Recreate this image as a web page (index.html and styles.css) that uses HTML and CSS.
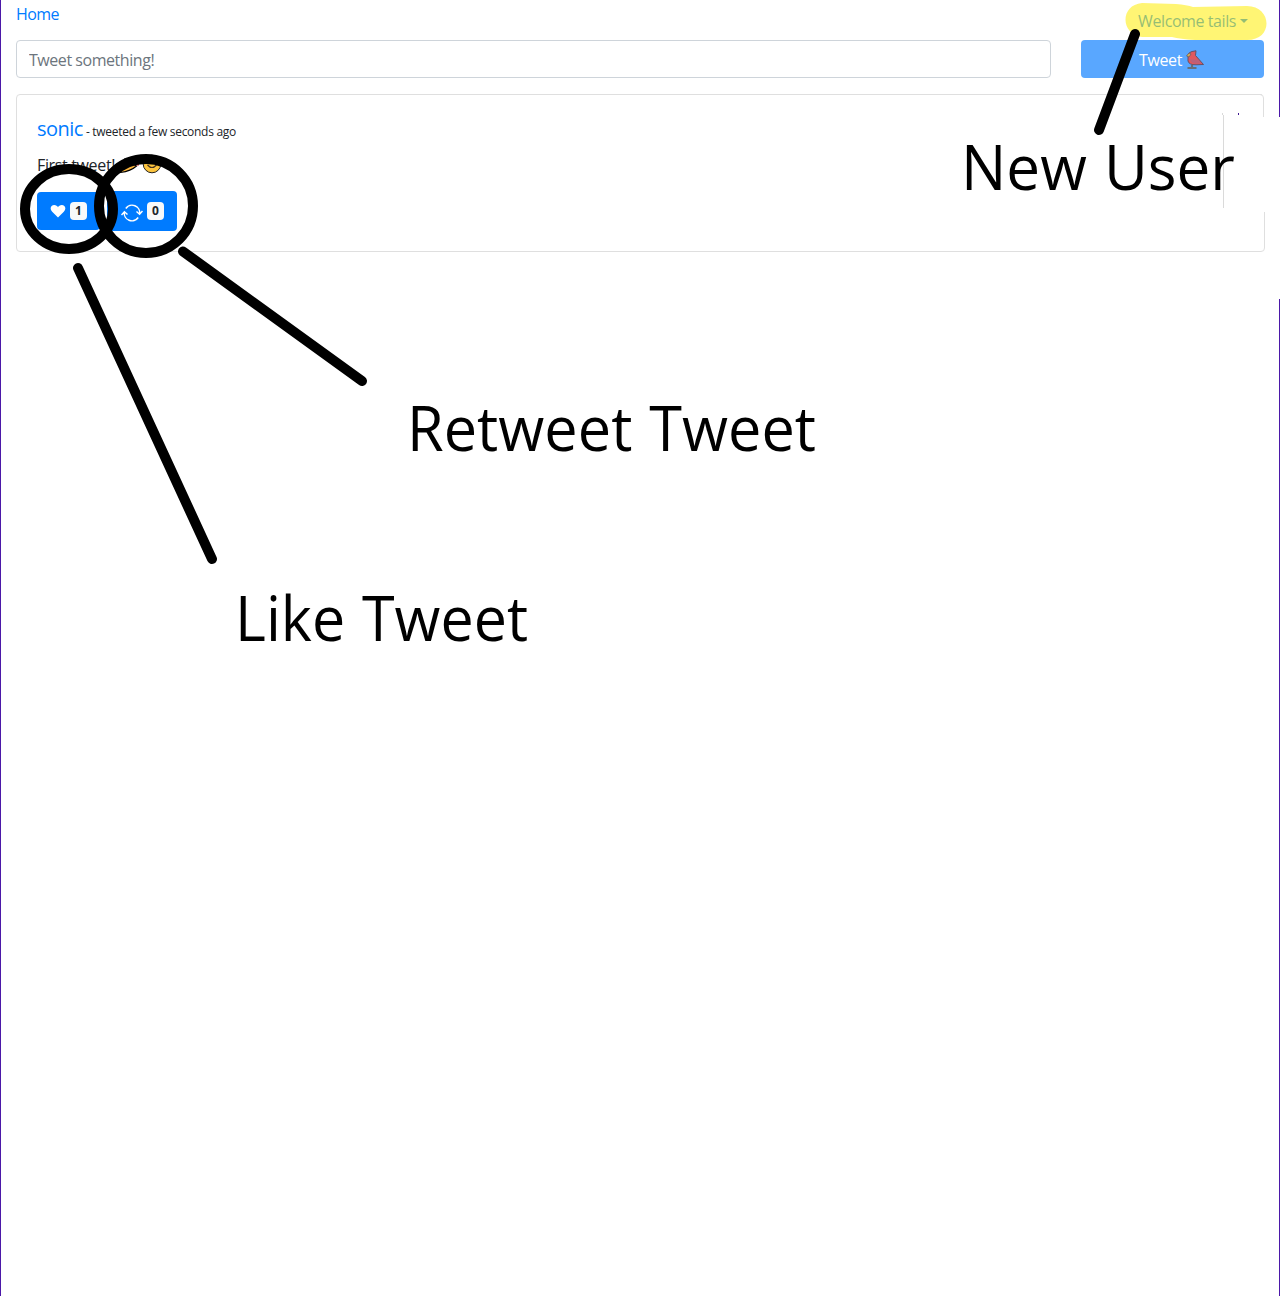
FILE: index.html
```html
<!DOCTYPE html>
<html lang="en">
<head>
<meta charset="utf-8">
<title>Home</title>
<link rel="stylesheet" href="styles.css">
</head>
<body>
<div class="page">
  <nav class="nav">
    <a class="home">Home</a>
    <a class="account"><span class="account-name">Welcome tails</span><span class="caret"></span></a>
  </nav>
  <form class="compose">
    <input class="compose-input" type="text" placeholder="Tweet something!">
    <button class="compose-button" type="button"><span>Tweet</span>
      <svg class="bird" width="20" height="20" viewBox="0 0 20 20">
        <path d="M7 15v3M2.500 18h9" stroke="#66707a" stroke-width="2.200" fill="none"/>
        <path d="M7 1.500L11 .8L10.500 5.500L18.500 14.500L11 14.800Q4 15 3 11V5Q4 2 7 1.500Z" fill="#e0585f" stroke="#655166" stroke-width="1"/>
        <path d="M4 3L1.500 6L4 7L6 4Z" fill="#d5b356" stroke="#655166" stroke-width=".7"/>
        <path d="M4.500 9.500H13L16.500 13.500H12Q7 14 4.500 9.500Z" fill="#bd6078"/>
      </svg>
    </button>
  </form>
  <article class="card">
    <h5 class="heading"><a class="author">sonic</a> <small class="time">- tweeted a few seconds ago</small></h5>
    <div class="message"><span class="message-text">First tweet!</span>
      <svg class="emoji" width="44" height="22" viewBox="0 0 44 22">
        <path d="M1.500 19.500L6 6L17.500 13Q12 18 1.500 19.500Z" fill="#fcb63c" stroke="#000" stroke-width="1.200"/>
        <path d="M13 11L20 10M10 5l4 5M14 4l1 6" stroke="#b32b28" stroke-width="2"/>
        <path d="M17 11.500h3" stroke="#b32b28" stroke-width="2"/>
        <circle cx="33" cy="11" r="8.800" fill="#fcc43d" stroke="#222" stroke-width="1"/>
        <path d="M28.500 12Q33 17 37.500 12M29 9l2-1M35 8l2 1" fill="none" stroke="#432" stroke-width="1.200"/>
      </svg>
    </div>
    <div class="actions">
      <button class="action like" type="button">
        <svg width="16" height="14" viewBox="0 0 16 14"><path d="M8 13.500L2.200 7.700C-.8 4.500 1 1 4.200 1C6 1 7.300 2 8 3.200C8.700 2 10 1 11.800 1C15 1 16.800 4.500 13.800 7.700Z" fill="#fff"/></svg>
        <span class="badge">1</span>
      </button>
      <button class="action retweet" type="button">
        <svg class="cycle" width="22" height="18" viewBox="0 0 22 18" fill="none" stroke="#fff" stroke-width="1.500"><path d="M4.800 4.500A7.600 7.600 0 0 1 18.600 10M17.200 13.500A7.600 7.600 0 0 1 3.400 8M.5 11L3.400 7.800L6.500 10.500M15.500 7.500L18.600 10.200L21.500 7"/></svg>
        <span class="badge">0</span>
      </button>
    </div>
  </article>
</div>
<svg class="notes" width="1280" height="1296" viewBox="0 0 1280 1296">
  <path d="M1142 3L1176 4Q1187 5 1193 7L1247 6C1272 6 1274 40 1247 40L1195 40Q1180 39 1172 37L1142 37C1120 34 1120 5 1142 3Z" fill="#ffee10" fill-opacity=".58"/>
  <rect x="1262" y="93" width="4" height="24" fill="#fff"/>
  <path d="M1258 94.500H1260Q1263.500 94.500 1263.500 98V117" fill="none" stroke="#dfdfdf"/>
  <rect x="1223" y="117" width="57" height="95" fill="#fff"/>
  <rect x="1279" y="117" width="1" height="182" fill="#fff"/>
  <path d="M1222.500 113V115M1223.500 115V208" stroke="#dadada"/>
  <path d="M1238.500 113V115" stroke="#3f1791"/>
  <g fill="none" stroke="#000" stroke-width="10" stroke-linecap="round">
    <ellipse cx="69" cy="209" rx="44" ry="40"/>
    <ellipse cx="146" cy="206" rx="47" ry="47"/>
    <path d="M1135 34L1099 130M183 251.500L362 381M78 268L212 559"/>
  </g>
  <g class="note-text">
    <text x="961" y="189.500" textLength="274" lengthAdjust="spacingAndGlyphs">New User</text>
    <text x="407" y="450.500" textLength="409" lengthAdjust="spacingAndGlyphs">Retweet Tweet</text>
    <text x="235" y="640.500" textLength="293" lengthAdjust="spacingAndGlyphs">Like Tweet</text>
  </g>
</svg>
</body>
</html>
```
FILE: styles.css
```css
* { box-sizing: border-box; }
body {
  margin: 0;
  background: #fff;
  color: #212529;
  font: 16px/24px "Open Sans", "Noto Sans", sans-serif;
}
.page {
  width: 1280px;
  height: 1296px;
  padding: 0 15px;
  border: solid #4b18a8;
  border-width: 0 1px;
}
.nav { display: flex; justify-content: space-between; height: 40px; }
.home { padding-top: 2px; color: #007bff; letter-spacing: -.6px; }
.account { display: flex; align-items: center; gap: 4px; padding: 2px 16px 0 0; color: #007bff; letter-spacing: -.42px; }
.caret { border: 4.500px solid transparent; border-top-color: currentColor; border-bottom: 0; }
.compose { display: flex; gap: 30px; margin: 0; }
.compose-input {
  width: 1035px;
  height: 38px;
  padding: 8px 12px 6px;
  border: 1px solid #ced4da;
  border-radius: 4px;
  font: inherit;
  letter-spacing: -.45px;
}
.compose-input::placeholder { color: #6c757d; opacity: 1; }
.compose-button {
  display: flex;
  align-items: center;
  justify-content: center;
  gap: 3px;
  width: 183px;
  height: 38px;
  padding: 2px 1px 0 0;
  border: 0;
  border-radius: 4px;
  background: #59a7ff;
  color: #fff;
  font: inherit;
  letter-spacing: -.4px;
}
.card {
  width: 1249px;
  height: 158px;
  margin-top: 16px;
  padding: 21px 20px 20px;
  border: 1px solid #dfdfdf;
  border-radius: 4px;
}
.heading { margin: 0 0 8px; font-size: 20px; font-weight: 400; line-height: 26px; }
.author { color: #007bff; letter-spacing: -.55px; }
.time { font-size: 12px; margin-left: -2px; letter-spacing: -.29px; }
.message { display: flex; height: 24px; }
.message-text { letter-spacing: -.35px; }
.emoji { flex: none; margin: 0 0 0 4px; }
.actions { display: flex; align-items: center; gap: 7px; margin-top: 14px; }
.action {
  display: flex;
  align-items: center;
  gap: 4px;
  height: 38px;
  padding: 0 13px;
  border: 0;
  border-radius: 4px;
  background: #007bff;
}
.like { width: 63px; }
.retweet { width: 70px; height: 40px; padding-left: 14px; }
.cycle { flex: none; margin-top: 3px; }
.badge {
  flex: none;
  width: 17px;
  height: 18px;
  border-radius: 4px;
  background: #f8f9fa;
  color: #212529;
  font: 700 12px/18px "Open Sans", "Noto Sans", sans-serif;
  text-align: center;
}
.notes { position: absolute; top: 0; left: 0; pointer-events: none; }
.note-text { font: 63px "Open Sans", "Noto Sans", sans-serif; word-spacing: 1.500px; fill: #000; }
```
